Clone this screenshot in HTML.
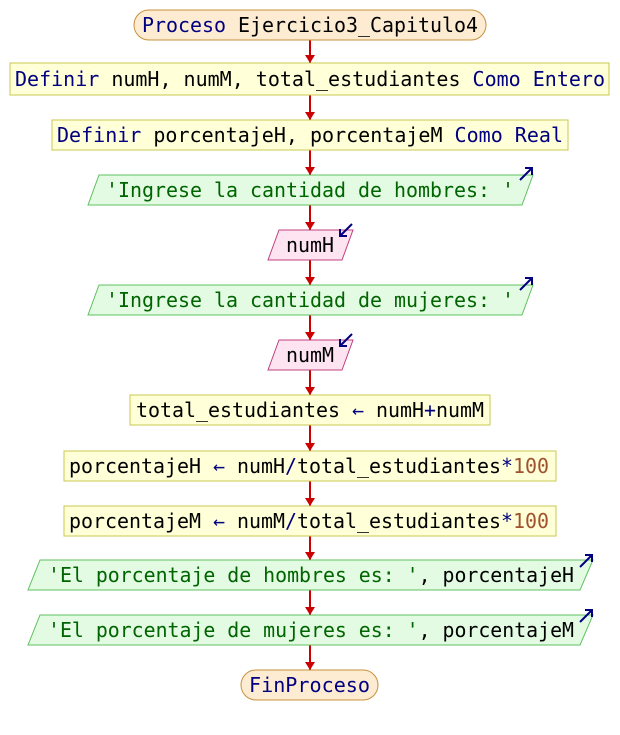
<!DOCTYPE html>
<html><head><meta charset="utf-8"><style>
html,body{margin:0;padding:0;background:#fff;width:620px;height:735px;overflow:hidden}
svg text{font-size:20px;dominant-baseline:central}
.m{font-family:"DejaVu Sans Mono","Liberation Mono",monospace}
.k{fill:#000080}.i{fill:#000}.s{fill:#006400}.n{fill:#a0522d}
</style></head><body>
<svg width="620" height="735" xmlns="http://www.w3.org/2000/svg">
<defs><marker id="ah" markerWidth="10" markerHeight="8" refX="5" refY="8" orient="0" markerUnits="userSpaceOnUse"><path d="M0,0 L10,0 L5,8 Z" fill="#cc0000"/></marker></defs>
<g stroke="#cc0000" stroke-width="2">
<line x1="310" y1="40" x2="310" y2="63" marker-end="url(#ah)"/>
<line x1="310" y1="95" x2="310" y2="120" marker-end="url(#ah)"/>
<line x1="310" y1="150" x2="310" y2="175" marker-end="url(#ah)"/>
<line x1="310" y1="205" x2="310" y2="230" marker-end="url(#ah)"/>
<line x1="310" y1="260" x2="310" y2="285" marker-end="url(#ah)"/>
<line x1="310" y1="315" x2="310" y2="340" marker-end="url(#ah)"/>
<line x1="310" y1="370" x2="310" y2="395" marker-end="url(#ah)"/>
<line x1="310" y1="425" x2="310" y2="451" marker-end="url(#ah)"/>
<line x1="310" y1="481" x2="310" y2="506" marker-end="url(#ah)"/>
<line x1="310" y1="536" x2="310" y2="560" marker-end="url(#ah)"/>
<line x1="310" y1="590" x2="310" y2="615" marker-end="url(#ah)"/>
<line x1="310" y1="645" x2="310" y2="670" marker-end="url(#ah)"/>
</g>
<rect x="134" y="10" width="352" height="30" rx="15" fill="#fdecd2" stroke="#c8903c"/>
<text class="m" x="142" y="25" textLength="336" lengthAdjust="spacingAndGlyphs"><tspan class="k">Proceso </tspan><tspan class="i">Ejercicio3_Capitulo4</tspan></text>
<rect x="10" y="63" width="599" height="32" fill="#ffffd8" stroke="#c8c850"/>
<text class="m" x="15" y="79" textLength="590" lengthAdjust="spacingAndGlyphs"><tspan class="k">Definir </tspan><tspan class="i">numH, numM, total_estudiantes </tspan><tspan class="k">Como Entero</tspan></text>
<rect x="52" y="120" width="516" height="30" fill="#ffffd8" stroke="#c8c850"/>
<text class="m" x="57" y="135" textLength="506" lengthAdjust="spacingAndGlyphs"><tspan class="k">Definir </tspan><tspan class="i">porcentajeH, porcentajeM </tspan><tspan class="k">Como Real</tspan></text>
<g fill="#e2fbe2" stroke="#60c060">
<polygon points="99,175 533,175 522,205 88,205"/>
<polygon points="99,285 533,285 522,315 88,315"/>
<polygon points="40,560 593,560 580,590 28,590"/>
<polygon points="40,615 593,615 580,645 28,645"/>
</g>
<text class="m s" x="106" y="190" textLength="408" lengthAdjust="spacingAndGlyphs">'Ingrese la cantidad de hombres: '</text>
<text class="m s" x="106" y="300" textLength="408" lengthAdjust="spacingAndGlyphs">'Ingrese la cantidad de mujeres: '</text>
<text class="m" x="48" y="575" textLength="526" lengthAdjust="spacingAndGlyphs"><tspan class="s">'El porcentaje de hombres es: '</tspan><tspan class="i">, porcentajeH</tspan></text>
<text class="m" x="48" y="630" textLength="526" lengthAdjust="spacingAndGlyphs"><tspan class="s">'El porcentaje de mujeres es: '</tspan><tspan class="i">, porcentajeM</tspan></text>
<g fill="#fde4f0" stroke="#c04080">
<polygon points="279,230 353,230 342,260 268,260"/>
<polygon points="279,340 353,340 342,370 268,370"/>
</g>
<text class="m i" x="286" y="245" textLength="48" lengthAdjust="spacingAndGlyphs">numH</text>
<text class="m i" x="286" y="355" textLength="48" lengthAdjust="spacingAndGlyphs">numM</text>
<g stroke="#000080" stroke-width="2" fill="none">
<path d="M520,180 L532,168 M525,168 L532,168 L532,175"/>
<path d="M520,290 L532,278 M525,278 L532,278 L532,285"/>
<path d="M580,567 L592,555 M585,555 L592,555 L592,562"/>
<path d="M580,622 L592,610 M585,610 L592,610 L592,617"/>
<path d="M352,224 L340,236 M340,229 L340,236 L347,236"/>
<path d="M352,334 L340,346 M340,339 L340,346 L347,346"/>
</g>
<g fill="#ffffd8" stroke="#c8c850">
<rect x="130" y="395" width="360" height="30"/>
<rect x="64" y="451" width="492" height="30"/>
<rect x="64" y="506" width="492" height="30"/>
</g>
<text class="m" x="136" y="410" textLength="348" lengthAdjust="spacingAndGlyphs"><tspan class="i">total_estudiantes </tspan><tspan class="k">←</tspan><tspan class="i"> numH</tspan><tspan class="k">+</tspan><tspan class="i">numM</tspan></text>
<text class="m" x="69" y="466" textLength="480" lengthAdjust="spacingAndGlyphs"><tspan class="i">porcentajeH </tspan><tspan class="k">←</tspan><tspan class="i"> numH</tspan><tspan class="k">/</tspan><tspan class="i">total_estudiantes</tspan><tspan class="k">*</tspan><tspan class="n">100</tspan></text>
<text class="m" x="69" y="521" textLength="480" lengthAdjust="spacingAndGlyphs"><tspan class="i">porcentajeM </tspan><tspan class="k">←</tspan><tspan class="i"> numM</tspan><tspan class="k">/</tspan><tspan class="i">total_estudiantes</tspan><tspan class="k">*</tspan><tspan class="n">100</tspan></text>
<rect x="241" y="670" width="137" height="30" rx="15" fill="#fdecd2" stroke="#c8903c"/>
<text class="m k" x="249" y="685" textLength="121" lengthAdjust="spacingAndGlyphs">FinProceso</text>
</svg>
</body></html>
